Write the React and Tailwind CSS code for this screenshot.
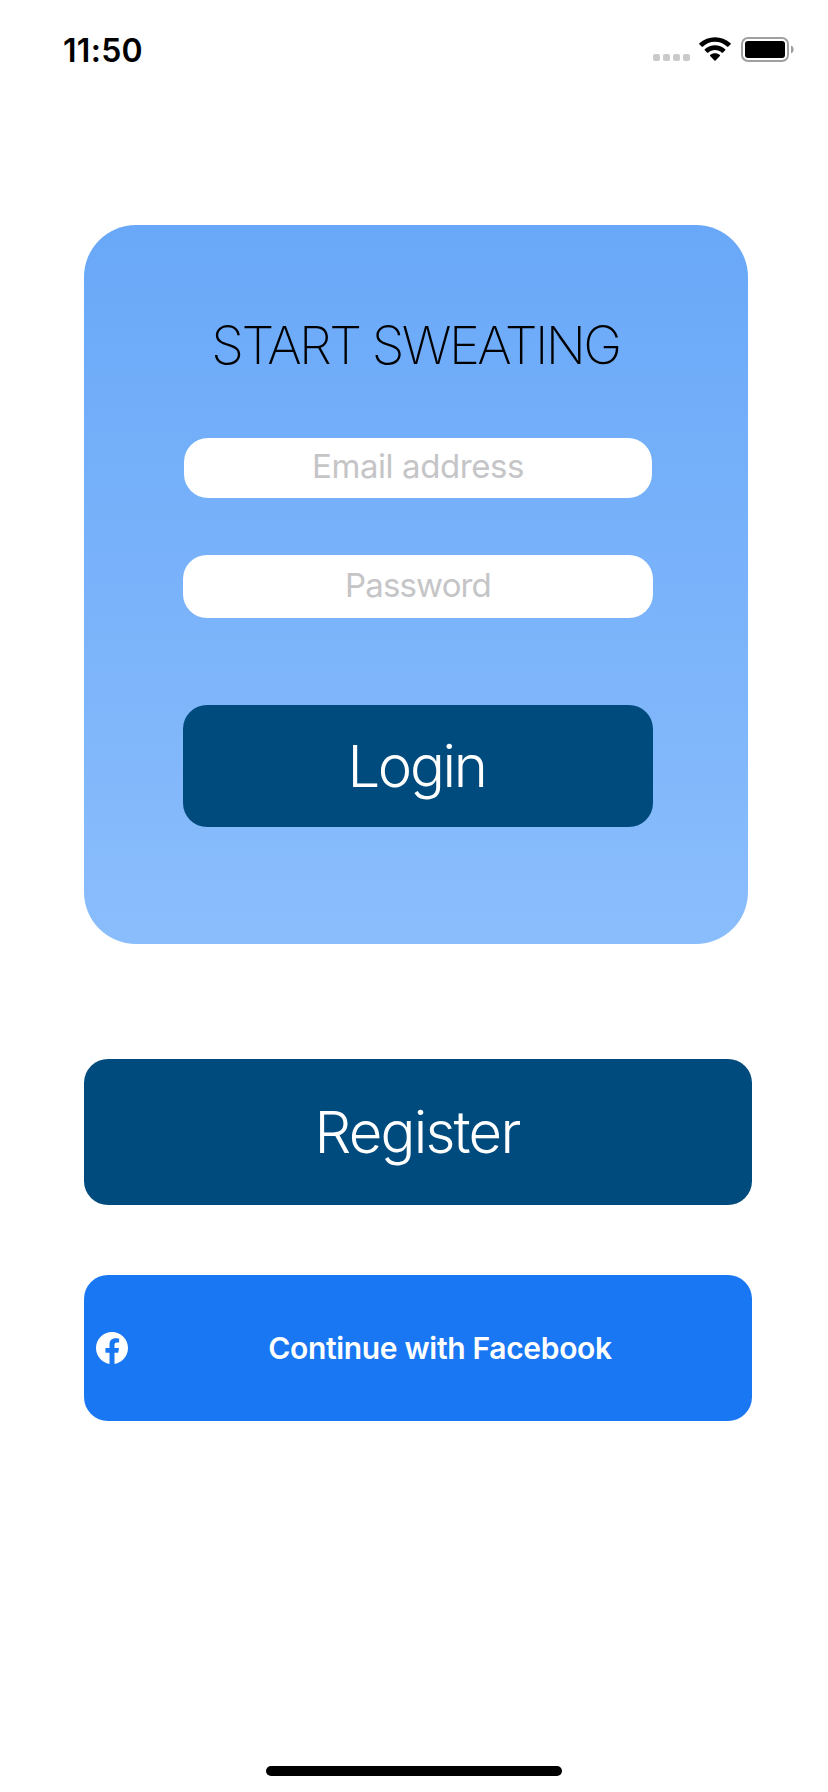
function StatusBar() {
  return (
    <header className="flex h-[100px] justify-between pl-[63px] pr-[34px]">
      <time className="mt-[31px] h-10 text-[32px] leading-10 font-semibold tracking-[0.300px]">11:50</time>
      <div className="mt-[36px] flex h-[27px]">
        <div className="mt-[18px] mr-[9px] flex h-[7px] gap-[3px]">
          <span className="size-[7px] rounded-[2px] bg-[#cacaca]" />
          <span className="size-[7px] rounded-[2px] bg-[#cacaca]" />
          <span className="size-[7px] rounded-[2px] bg-[#cacaca]" />
          <span className="size-[7px] rounded-[2px] bg-[#cacaca]" />
        </div>
        <svg width="32" height="24" viewBox="1.300 0.600 29.400 21.800" className="mt-[1px] mr-[9px]" aria-hidden="true">
          <path d="M16 4.900c4.300 0 8.300 1.700 11.300 4.600.2.2.6.2.8 0l2.300-2.300c.3-.3.3-.7 0-.9-8-7.600-20.900-7.600-28.800 0-.3.2-.3.6 0 .9l2.300 2.300c.2.2.6.2.8 0C7.700 6.600 11.700 4.900 16 4.900Z" />
          <path d="M16 12.500c2.400 0 4.600.9 6.300 2.400.3.2.6.2.8 0l2.300-2.300c.3-.3.3-.7 0-.9-5.300-4.900-13.500-4.900-18.800 0-.3.2-.3.6 0 .9l2.300 2.300c.2.2.6.2.8 0 1.700-1.500 3.900-2.400 6.300-2.400Z" />
          <path d="M20.500 18c.3-.3.3-.7 0-.9-2.600-2.200-6.400-2.200-9 0-.3.2-.3.600 0 .9l4 4.100c.3.300.7.300 1 0Z" />
        </svg>
        <svg width="54" height="27" viewBox="0 0 54 27" aria-hidden="true">
          <rect x="2" y="2" width="46" height="23" rx="6" fill="none" stroke="#a0a0a0" strokeWidth="2" />
          <rect x="5" y="5" width="40" height="17" rx="3" />
          <path d="M51 9.500v8c1.600-.6 2.700-2.200 2.700-4s-1.100-3.400-2.700-4Z" fill="#a0a0a0" />
        </svg>
      </div>
    </header>
  );
}

export default function App() {
  return (
    <div className="flex h-[1792px] w-[828px] flex-col bg-white font-['Inter',sans-serif] text-black">
      <StatusBar />
      <main className="mt-[125px] ml-[84px] flex w-[668px] flex-col">
        <section className="flex h-[719px] w-[664px] flex-col items-center rounded-[52px] bg-linear-to-b from-[#69a8f8] to-[#8abdfc]">
          <h1 className="mt-[87px] h-[66px] pr-[1px] text-[52.500px] leading-[66px] font-extralight tracking-[-2.600px] whitespace-nowrap">
            START SWEATING
          </h1>
          <input
            type="email"
            aria-label="Email address"
            placeholder="Email address"
            className="mt-[60px] ml-1 h-[60px] w-[468px] rounded-[24px] bg-white pb-[5px] text-center text-[33px] tracking-[-0.420px] placeholder:text-[#c5c5c7]"
          />
          <input
            type="password"
            aria-label="Password"
            placeholder="Password"
            className="mt-[57px] ml-1 h-[63px] w-[470px] rounded-[24px] bg-white pb-[3px] text-center text-[33px] tracking-[-0.850px] placeholder:text-[#c5c5c7]"
          />
          <button className="mt-[87px] ml-1 h-[122px] w-[470px] rounded-[24px] bg-[#004b7d] pr-[3px] text-[58px] font-light tracking-[-2.300px] text-white">
            Login
          </button>
        </section>
        <button className="mt-[115px] h-[146px] rounded-[24px] bg-[#004b7d] pr-[2px] text-[58px] font-light tracking-[-1.800px] text-white">
          Register
        </button>
        <button className="mt-[70px] flex h-[146px] items-center rounded-[24px] bg-[#1977f3] pl-3 text-white">
          <svg width="32" height="32" viewBox="0 0 32 32" className="mb-[1px]" aria-hidden="true">
            <path
              fill="white"
              d="M32 16.100C32 7.210 24.840 0 16 0S0 7.210 0 16.100c0 8.040 5.850 14.700 13.500 15.900V20.750H9.440V16.100h4.060v-3.550c0-4.030 2.390-6.260 6.040-6.260 1.750 0 3.580.31 3.580.31v3.960h-2.020c-1.990 0-2.600 1.240-2.600 2.520v3.020h4.440l-.71 4.650H18.500V32C26.150 30.800 32 24.140 32 16.100Z"
            />
          </svg>
          <span className="flex-1 text-center text-[30px] font-semibold tracking-[-0.320px]">
            Continue with Facebook
          </span>
        </button>
      </main>
      <div className="mt-auto mb-4 h-[10px] w-[296px] self-center rounded-full bg-black" />
    </div>
  );
}
